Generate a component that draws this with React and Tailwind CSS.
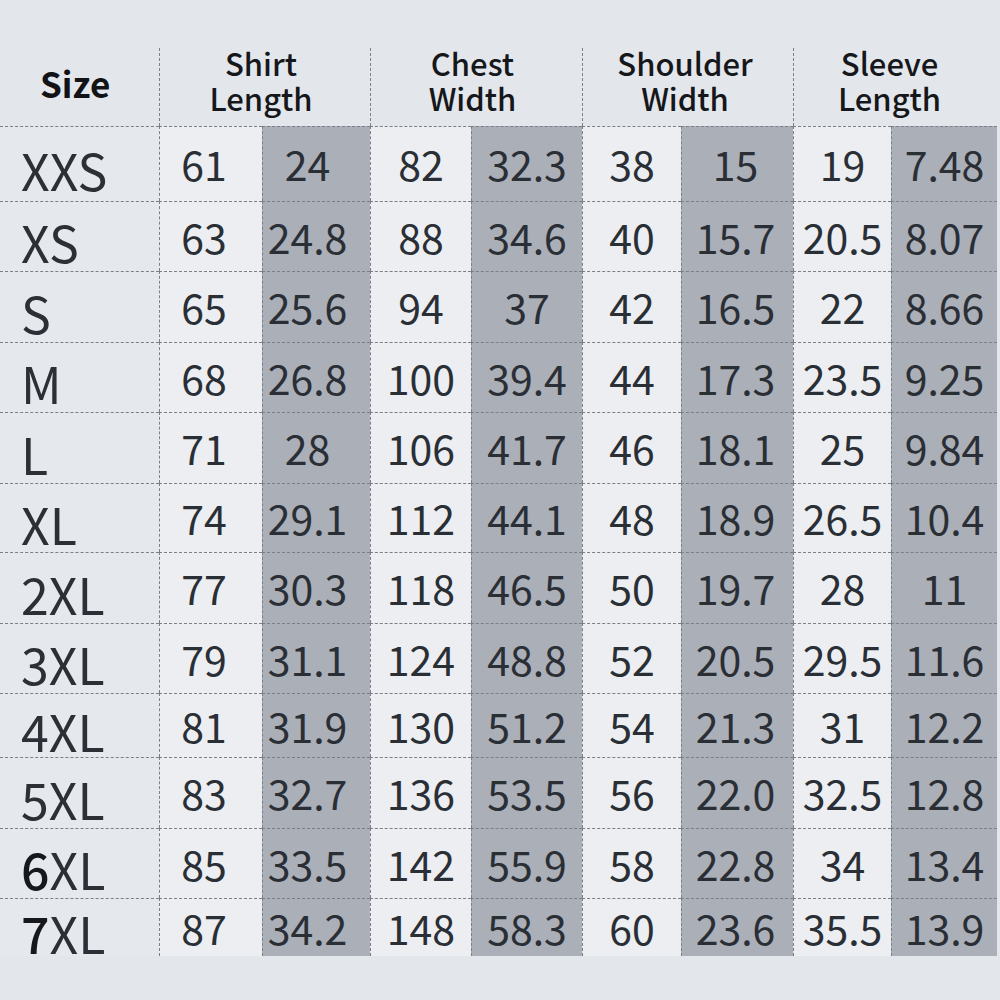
const rows = [
  { size: 'XXS', h: 'h-[75px]', v: ['61', '24', '82', '32.3', '38', '15', '19', '7.48'] },
  { size: 'XS', h: 'h-[70px]', v: ['63', '24.8', '88', '34.6', '40', '15.7', '20.5', '8.07'] },
  { size: 'S', h: 'h-[71px]', v: ['65', '25.6', '94', '37', '42', '16.5', '22', '8.66'] },
  { size: 'M', h: 'h-[70px]', v: ['68', '26.8', '100', '39.4', '44', '17.3', '23.5', '9.25'] },
  { size: 'L', h: 'h-[71px]', v: ['71', '28', '106', '41.7', '46', '18.1', '25', '9.84'] },
  { size: 'XL', h: 'h-[69px]', v: ['74', '29.1', '112', '44.1', '48', '18.9', '26.5', '10.4'] },
  { size: '2XL', h: 'h-[71px]', v: ['77', '30.3', '118', '46.5', '50', '19.7', '28', '11'] },
  { size: '3XL', h: 'h-[70px]', v: ['79', '31.1', '124', '48.8', '52', '20.5', '29.5', '11.6'] },
  { size: '4XL', h: 'h-[64px]', v: ['81', '31.9', '130', '51.2', '54', '21.3', '31', '12.2'] },
  { size: '5XL', h: 'h-[71px]', v: ['83', '32.7', '136', '53.5', '56', '22.0', '32.5', '12.8'] },
  { size: '6XL', h: 'h-[70px]', v: ['85', '33.5', '142', '55.9', '58', '22.8', '34', '13.4'] },
  { size: '7XL', h: 'h-[58px]', v: ['87', '34.2', '148', '58.3', '60', '23.6', '35.5', '13.9'] },
]

// eight value columns, light / dark pairs; shirt pair sits a little left of centre
const cols = [
  'w-[103px] pr-[14px]',
  'w-[108px] pr-[18px]',
  'w-[101px]',
  'w-[111px]',
  'w-[99px]',
  'w-[112px] pr-[4px]',
  'w-[98px]',
  'w-[106px]',
]
const groups = [
  { top: 'Shirt', bottom: 'Length', w: 'w-[211px] pr-[8px]' },
  { top: 'Chest', bottom: 'Width', w: 'w-[212px] pr-[8px]' },
  { top: 'Shoulder', bottom: 'Width', w: 'w-[211px] pr-[6px]' },
  { top: 'Sleeve', bottom: 'Length', w: 'w-[204px] pr-[12px]' },
]

function SizeLabel({ size }) {
  // the leading digit on 6XL / 7XL prints heavier in the original
  if (size === '6XL' || size === '7XL') {
    return (
      <span>
        <span className="font-medium text-[#16181c]">{size[0]}</span>
        {size.slice(1)}
      </span>
    )
  }
  return <span>{size}</span>
}

export default function App() {
  return (
    <div
      className="w-[1000px] h-[1000px] bg-[#e3e6ea] text-[#2a2e35] overflow-hidden"
      style={{ fontFamily: '"Noto Sans CJK SC", "Noto Sans", sans-serif' }}
    >
      <div className="pt-[48px]">
        {/* header */}
        <div className="flex h-[78px]">
          <div className="w-[159px] flex items-center pl-[40px] pb-[8px] text-[35px] font-bold text-[#111317]">
            Size
          </div>
          {groups.map((g) => (
            <div
              key={g.top}
              className={`${g.w} border-l border-dashed border-[#7b7f87] flex flex-col items-center justify-center pb-[14px] text-[31px] leading-[35px] font-medium text-[#15171b]`}
            >
              <span>{g.top}</span>
              <span>{g.bottom}</span>
            </div>
          ))}
        </div>

        {/* body */}
        {rows.map((r) => (
          <div key={r.size} className={`flex ${r.h}`}>
            <div className="w-[159px] border-t border-dashed border-[#7b7f87] bg-[#e5e8ec] flex items-center pl-[21px] pt-[10px] text-[50px] font-normal text-[#2c2f35]">
              <SizeLabel size={r.size} />
            </div>
            {r.v.map((val, i) => (
              <div
                key={i}
                className={`${cols[i]} border-t border-l border-dashed border-[#7b7f87] flex items-center justify-center text-[41px] font-normal ${
                  i % 2 === 0 ? 'bg-[#eceef2]' : 'bg-[#abafb8]'
                }`}
              >
                {val}
              </div>
            ))}
          </div>
        ))}
      </div>
    </div>
  )
}
